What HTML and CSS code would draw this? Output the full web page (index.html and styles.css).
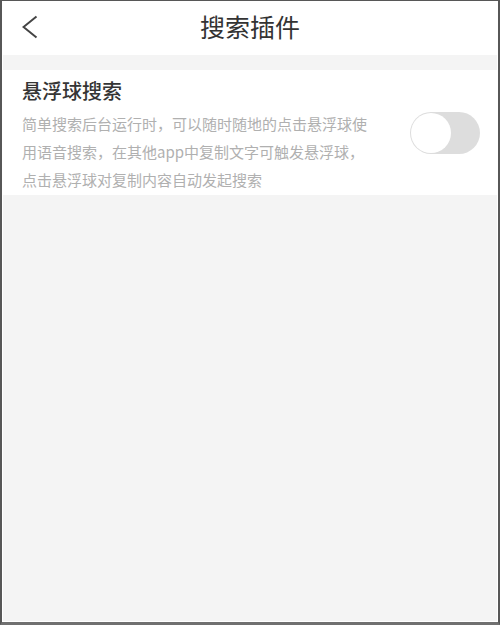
FILE: index.html
```html
<!DOCTYPE html>
<html lang="zh-CN">
<head>
<meta charset="utf-8">
<title>搜索插件</title>
<link rel="stylesheet" href="styles.css">
</head>
<body>
<div class="frame">
  <div class="screen">
    <header class="topbar">
      <div class="back">
        <svg width="16" height="24" viewBox="0 0 16 24"><polyline points="14.5,1.5 1.5,12 14.5,22.5" fill="none" stroke="#444" stroke-width="2" stroke-linejoin="miter"/></svg>
      </div>
      <h1 class="title">搜索插件</h1>
      <div class="spacer"></div>
    </header>
    <section class="card">
      <div class="card-text">
        <h2 class="card-title">悬浮球搜索</h2>
        <p class="card-desc">简单搜索后台运行时，可以随时随地的点击悬浮球使<br>用语音搜索，在其他app中复制文字可触发悬浮球，<br>点击悬浮球对复制内容自动发起搜索</p>
      </div>
      <div class="toggle"><div class="knob"></div></div>
    </section>
  </div>
</div>
</body>
</html>
```
FILE: styles.css
```css
html, body {
  margin: 0;
  padding: 0;
}
body {
  font-family: "Noto Sans CJK SC", "Noto Sans", sans-serif;
  background: #f4f4f4;
}
.frame {
  box-sizing: border-box;
  width: 500px;
  height: 625px;
  border-left: 2px solid #575757;
  border-right: 2px solid #575757;
  border-top: 1px solid #575757;
  border-bottom: 3px solid #707070;
  background: #f4f4f4;
}
.screen {
  box-sizing: border-box;
  height: 100%;
  border: 1px solid #ffffff;
  background: #f4f4f4;
}
.topbar {
  display: grid;
  grid-template-columns: 1fr auto 1fr;
  align-items: center;
  height: 53px;
  background: #ffffff;
  box-sizing: border-box;
  padding-bottom: 5px;
}
.back {
  padding-left: 19px;
  display: flex;
  align-items: center;
  padding-top: 2px;
}
.back svg {
  display: block;
}
.title {
  margin: 0;
  font-size: 25px;
  font-weight: 400;
  color: #333333;
  line-height: 30px;
}
.card {
  margin-top: 15px;
  background: #ffffff;
  display: flex;
  align-items: center;
  justify-content: space-between;
  box-sizing: border-box;
  height: 125px;
  padding: 0 17px 0 19px;
}
.card-text {
  display: flex;
  flex-direction: column;
  align-self: flex-start;
  padding-top: 7px;
}
.card-title {
  margin: 0;
  font-size: 20px;
  font-weight: 500;
  color: #353535;
  line-height: 28px;
}
.card-desc {
  margin: 5px 0 0 0;
  font-size: 15px;
  line-height: 28px;
  color: #b0b0b0;
  white-space: nowrap;
}
.toggle {
  display: flex;
  align-items: center;
  box-sizing: border-box;
  width: 70px;
  height: 42px;
  padding: 1px;
  border-radius: 21px;
  background: #dddddd;
}
.knob {
  width: 40px;
  height: 40px;
  border-radius: 50%;
  background: #ffffff;
}
```
